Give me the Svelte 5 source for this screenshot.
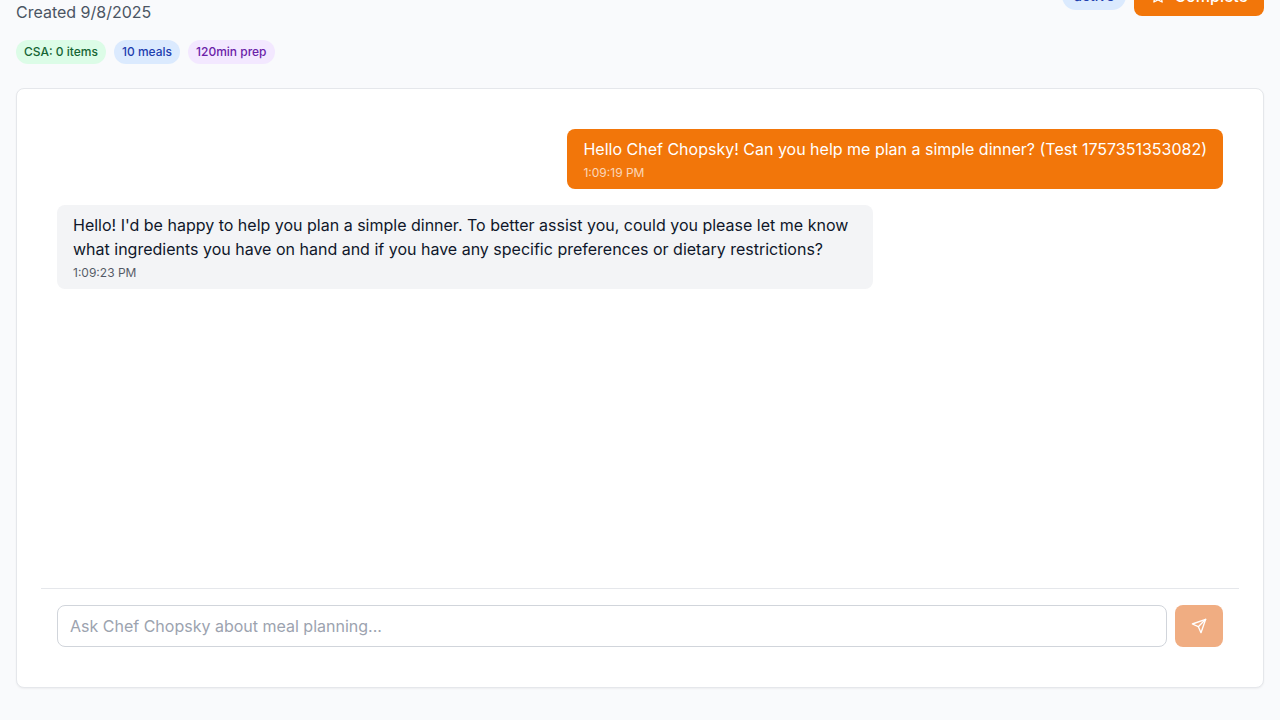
<script>
  const tags = [
    { label: 'CSA: 0 items', tone: 'green' },
    { label: '10 meals', tone: 'blue' },
    { label: '120min prep', tone: 'purple' }
  ];
  const messages = [
    {
      role: 'user',
      text: 'Hello Chef Chopsky! Can you help me plan a simple dinner? (Test 1757351353082)',
      time: '1:09:19 PM'
    },
    {
      role: 'assistant',
      text: "Hello! I'd be happy to help you plan a simple dinner. To better assist you, could you please let me know what ingredients you have on hand and if you have any specific preferences or dietary restrictions?",
      time: '1:09:23 PM'
    }
  ];
  let draft = $state('');
</script>

<main class="page">
  <header class="top">
    <p class="created">Created 9/8/2025</p>
    <div class="actions">
      <span class="status">active</span>
      <button class="complete" type="button">
        <svg class="icon" viewBox="0 0 24 24" aria-hidden="true">
          <polygon points="12 2 15.09 8.26 22 9.27 17 14.14 18.18 21.02 12 17.77 5.82 21.02 7 14.14 2 9.27 8.91 8.26 12 2" />
        </svg>
        Complete
      </button>
    </div>
  </header>

  <div class="tags">
    {#each tags as tag}
      <span class="tag {tag.tone}">{tag.label}</span>
    {/each}
  </div>

  <section class="card">
    <div class="messages">
      {#each messages as message}
        <article class="bubble {message.role}">
          <p class="text">{message.text}</p>
          <p class="time">{message.time}</p>
        </article>
      {/each}
    </div>
    <form class="composer" onsubmit={(event) => event.preventDefault()}>
      <input
        class="field"
        type="text"
        aria-label="Message"
        placeholder="Ask Chef Chopsky about meal planning..."
        bind:value={draft}
      />
      <button class="send" type="submit" aria-label="Send" disabled={!draft.trim()}>
        <svg class="icon" viewBox="0 0 24 24" aria-hidden="true">
          <path d="m22 2-7 20-4-9-9-4Z" />
          <path d="M22 2 11 13" />
        </svg>
      </button>
    </form>
  </section>
</main>

<style>
  :global(body) {
    background: #f9fafc;
  }

  .page {
    box-sizing: border-box;
    min-height: 100vh;
    padding: 0 16px 32px;
    overflow: hidden;
    background: #f9fafc;
    color: #0f172a;
    font-family: Inter, 'Liberation Sans', sans-serif;
    font-size: 16px;
    line-height: 24px;
  }

  p {
    margin: 0;
  }

  /* The header starts above the top edge, as on a page scrolled down. */
  .top {
    display: flex;
    align-items: center;
    justify-content: space-between;
    min-height: 56px;
    margin-top: -32px;
    margin-bottom: 16px;
  }

  .created {
    align-self: flex-end;
    color: #4b5563;
  }

  .actions {
    display: flex;
    align-items: center;
    gap: 8px;
  }

  .status {
    padding: 4px 12px;
    border-radius: 14px;
    background: #dbeafe;
    color: #1e40af;
    font-size: 14px;
    font-weight: 500;
    line-height: 20px;
  }

  button {
    border: 0;
    border-radius: 8px;
    background: #f2760a;
    color: #fff;
    font: inherit;
    font-weight: 500;
    cursor: pointer;
  }

  .complete {
    display: flex;
    align-items: center;
    gap: 8px;
    padding: 8px 16px;
  }

  .icon {
    display: block;
    width: 16px;
    height: 16px;
    fill: none;
    stroke: currentColor;
    stroke-width: 2;
    stroke-linecap: round;
    stroke-linejoin: round;
  }

  .tags {
    display: flex;
    flex-wrap: wrap;
    gap: 8px;
    margin-bottom: 24px;
  }

  .tag {
    padding: 4px 8px;
    border-radius: 12px;
    font-size: 12px;
    font-weight: 500;
    line-height: 16px;
  }

  .green {
    background: #dcfce7;
    color: #166534;
  }

  .blue {
    background: #dbeafe;
    color: #1e40af;
  }

  .purple {
    background: #f3e8ff;
    color: #6b21a8;
  }

  .card {
    box-sizing: border-box;
    display: flex;
    flex-direction: column;
    min-height: calc(100vh - 120px);
    padding: 24px;
    border: 1px solid #e5e7eb;
    border-radius: 8px;
    background: #fff;
    box-shadow: 0 1px 2px rgb(0 0 0 / 5%);
  }

  .messages {
    display: flex;
    flex: 1;
    flex-direction: column;
    align-items: flex-start;
    gap: 16px;
    padding: 16px;
  }

  .bubble {
    box-sizing: border-box;
    max-width: 70%;
    padding: 8px 16px;
    border-radius: 8px;
  }

  .user {
    align-self: flex-end;
    background: #f2760a;
    color: #fff;
  }

  .assistant {
    background: #f3f4f6;
  }

  .time {
    margin-top: 4px;
    font-size: 12px;
    line-height: 16px;
    opacity: 0.7;
  }

  .composer {
    display: flex;
    gap: 8px;
    padding: 16px;
    border-top: 1px solid #e5e7eb;
  }

  .field {
    flex: 1;
    min-width: 0;
    padding: 8px 12px;
    border: 1px solid #d1d5db;
    border-radius: 8px;
    background: #fff;
    color: inherit;
    font: inherit;
  }

  .field::placeholder {
    color: #9ca3af;
    opacity: 1;
  }

  .send {
    padding: 8px 16px;
  }

  .send:disabled {
    background: #f0ad82;
    cursor: not-allowed;
  }
</style>
